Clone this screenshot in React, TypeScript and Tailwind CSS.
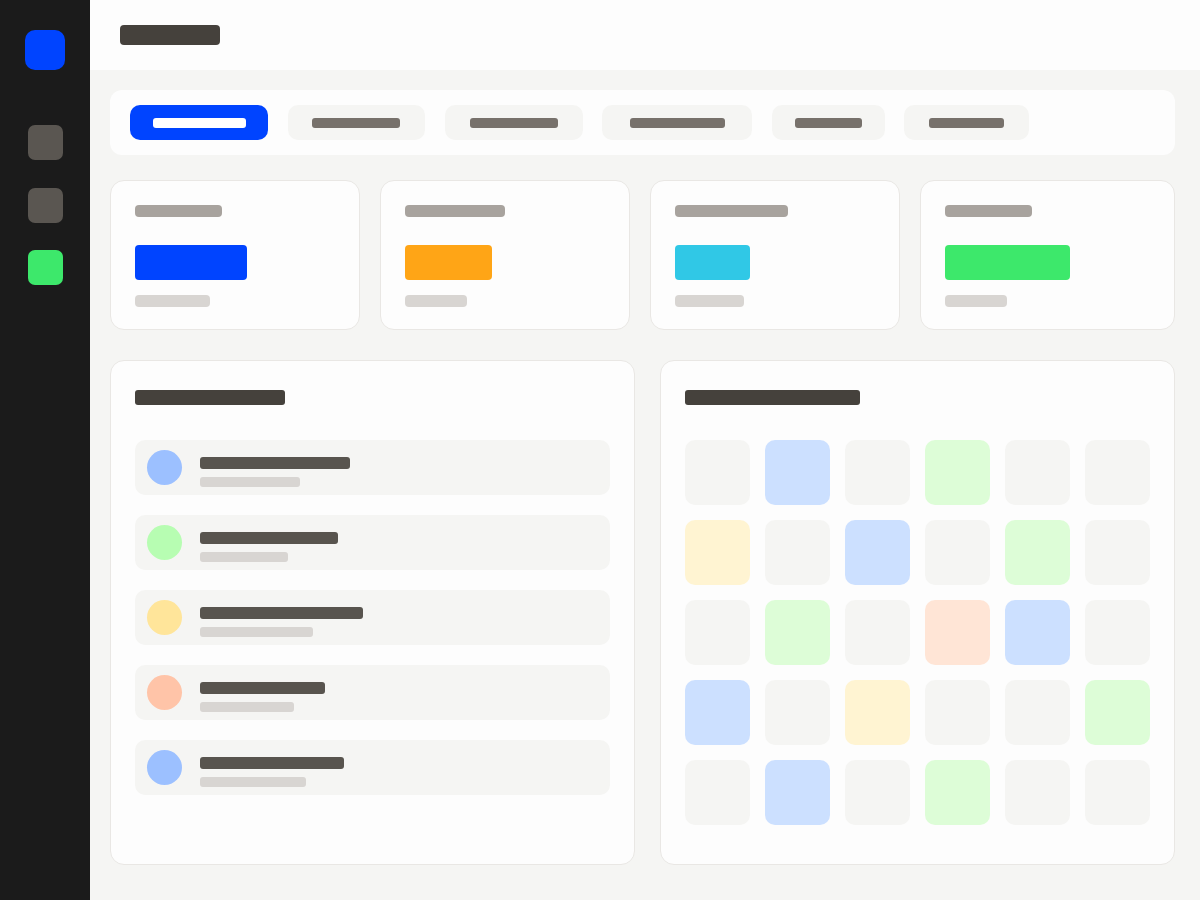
const tabs = [
  { w: "w-[138px]", bar: "w-[93px]" },
  { w: "w-[137.5px]", bar: "w-[88px]" },
  { w: "w-[138px]", bar: "w-[88px]" },
  { w: "w-[150px]", bar: "w-[95px]" },
  { w: "w-[113px]", bar: "w-[67px]" },
  { w: "w-[125px]", bar: "w-[75px]" },
];

const stats = [
  { label: "w-[87px]", value: "w-[112px] bg-[#0044ff]", sub: "w-[75px]" },
  { label: "w-[100px]", value: "w-[87px] bg-[#ffa516]", sub: "w-[62px]" },
  { label: "w-[113px]", value: "w-[75px] bg-[#30c8e6]", sub: "w-[69px]" },
  { label: "w-[87px]", value: "w-[125px] bg-[#3de86b]", sub: "w-[62px]" },
];

const rows = [
  { dot: "bg-[#9cc0ff]", name: "w-[150px]", sub: "w-[100px]" },
  { dot: "bg-[#b7fdb2]", name: "w-[138px]", sub: "w-[88px]" },
  { dot: "bg-[#ffe59a]", name: "w-[163px]", sub: "w-[113px]" },
  { dot: "bg-[#ffc4a8]", name: "w-[125px]", sub: "w-[94px]" },
  { dot: "bg-[#9cc0ff]", name: "w-[144px]", sub: "w-[106px]" },
];

const cellColor: Record<string, string> = {
  g: "bg-[#f5f5f3]",
  b: "bg-[#cce0ff]",
  n: "bg-[#ddfdd7]",
  y: "bg-[#fff4d2]",
  p: "bg-[#ffe5d6]",
};

const grid = [
  "gbgngg",
  "ygbgng",
  "gngpbg",
  "bgyggn",
  "gbgngg",
];

function Sidebar() {
  return (
    <aside className="w-[90px] shrink-0 bg-[#1b1b1b] flex flex-col items-center pt-[30px]">
      <div className="w-10 h-10 rounded-[10px] bg-[#0044ff]" />
      <div className="mt-[55px] flex flex-col gap-[27.5px]">
        <div className="w-[35px] h-[35px] rounded-[7px] bg-[#5a5651]" />
        <div className="w-[35px] h-[35px] rounded-[7px] bg-[#5a5651]" />
        <div className="w-[35px] h-[35px] rounded-[7px] bg-[#3de86b]" />
      </div>
    </aside>
  );
}

export default function App() {
  return (
    <div className="flex w-[1200px] h-[900px] bg-[#f5f5f3] overflow-hidden">
      <Sidebar />
      <main className="flex-1 flex flex-col">
        <header className="h-[70px] bg-[#fdfdfd] pl-[30px] flex items-center">
          <div className="w-[100px] h-5 rounded-[4px] bg-[#45413c]" />
        </header>

        <div className="pt-5 pl-5 pr-[25px] flex flex-col">
          {/* tabs */}
          <div className="h-[65px] bg-[#fdfdfd] rounded-[12px] px-5 flex items-center gap-[19.5px]">
            {tabs.map((t, i) => (
              <div
                key={i}
                className={`${t.w} h-[35px] rounded-[10px] flex items-center justify-center ${
                  i === 0 ? "bg-[#0044ff]" : "bg-[#f5f5f3]"
                }`}
              >
                <div
                  className={`${t.bar} h-[10px] rounded-[3px] ${
                    i === 0 ? "bg-white" : "bg-[#77716b]"
                  }`}
                />
              </div>
            ))}
          </div>

          {/* stat cards */}
          <div className="mt-[25px] grid grid-cols-[250px_250px_250px_1fr] gap-5">
            {stats.map((s, i) => (
              <div
                key={i}
                className="h-[150px] bg-[#fdfdfd] border border-[#e9e7e4] rounded-[14px] px-6 pt-6"
              >
                <div className={`${s.label} h-3 rounded-[4px] bg-[#a8a39e]`} />
                <div className={`${s.value} h-[35px] rounded-[4px] mt-7`} />
                <div className={`${s.sub} h-3 rounded-[4px] bg-[#d8d5d2] mt-[15px]`} />
              </div>
            ))}
          </div>

          <div className="mt-[30px] flex gap-[25px]">
            {/* list panel */}
            <section className="w-[525px] h-[505px] bg-[#fdfdfd] border border-[#e9e7e4] rounded-[14px] px-6 pt-[29px]">
              <div className="w-[150px] h-[15px] rounded-[3px] bg-[#45413c]" />
              <div className="mt-[35px] flex flex-col gap-5">
                {rows.map((r, i) => (
                  <div
                    key={i}
                    className="h-[55px] rounded-[10px] bg-[#f5f5f3] pl-3 flex items-center gap-[18px]"
                  >
                    <div className={`w-[35px] h-[35px] rounded-full ${r.dot}`} />
                    <div className="mt-[9px] flex flex-col gap-2">
                      <div className={`${r.name} h-3 rounded-[3px] bg-[#58544e]`} />
                      <div className={`${r.sub} h-[10px] rounded-[3px] bg-[#d8d5d2]`} />
                    </div>
                  </div>
                ))}
              </div>
            </section>

            {/* grid panel */}
            <section className="flex-1 h-[505px] bg-[#fdfdfd] border border-[#e9e7e4] rounded-[14px] px-6 pt-[29px]">
              <div className="w-[175px] h-[15px] rounded-[3px] bg-[#45413c]" />
              <div className="mt-[35px] grid grid-cols-[repeat(6,65px)] gap-[15px]">
                {grid.flatMap((row, ri) =>
                  row.split("").map((c, ci) => (
                    <div
                      key={`${ri}-${ci}`}
                      className={`w-[65px] h-[65px] rounded-[10px] ${cellColor[c]}`}
                    />
                  ))
                )}
              </div>
            </section>
          </div>
        </div>
      </main>
    </div>
  );
}
